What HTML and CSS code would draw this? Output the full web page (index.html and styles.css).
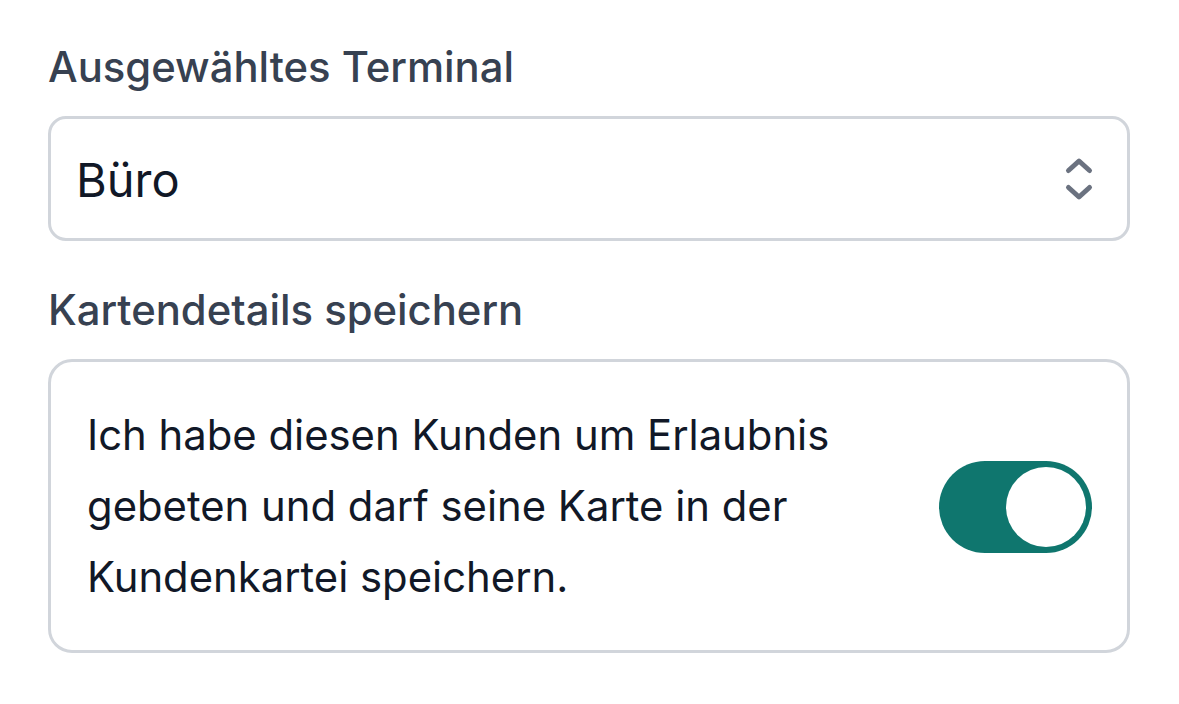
FILE: index.html
```html
<!DOCTYPE html>
<html lang="de">
<head>
<meta charset="utf-8">
<title>Terminal</title>
<link rel="stylesheet" href="styles.css">
</head>
<body>
<main class="form">
  <label class="label" for="terminal">Ausgewähltes Terminal</label>
  <div class="select" id="terminal">
    <span class="select-value">Büro</span>
    <svg class="chevrons" width="30" height="46" viewBox="0 0 30 46" aria-hidden="true">
      <polyline points="4.5,13.5 15,4 25.5,13.5" fill="none" stroke="#6b7280" stroke-width="5" stroke-linecap="round" stroke-linejoin="round"/>
      <polyline points="4.5,30.5 15,40 25.5,30.5" fill="none" stroke="#6b7280" stroke-width="5" stroke-linecap="round" stroke-linejoin="round"/>
    </svg>
  </div>
  <div class="label label-second">Kartendetails speichern</div>
  <div class="card">
    <p class="card-text">Ich habe diesen Kunden um Erlaubnis gebeten und darf seine Karte in der Kundenkartei speichern.</p>
    <div class="toggle" role="switch" aria-checked="true">
      <span class="knob"></span>
    </div>
  </div>
</main>
</body>
</html>
```

FILE: styles.css
```css
html, body {
  margin: 0;
  padding: 0;
  background: #ffffff;
}

body {
  font-family: Inter, "Noto Sans", "Liberation Sans", sans-serif;
  -webkit-font-smoothing: antialiased;
}

.form {
  display: flex;
  flex-direction: column;
  padding: 37px 49px 0 48px;
}

.label {
  display: block;
  font-size: 41.8px;
  line-height: 60px;
  font-weight: 500;
  color: #374151;
  margin: 0 0 19px 0;
}

.label-second {
  margin-top: 39px;
}

.select {
  height: 119px;
  border: 3px solid #d1d5db;
  border-radius: 18px;
  display: flex;
  align-items: center;
  justify-content: space-between;
  padding: 0 33px 0 25px;
}

.select-value {
  font-size: 47px;
  color: #111827;
  line-height: 60px;
  padding-top: 2px;
}

.chevrons {
  display: block;
  margin-top: 2px;
}

.card {
  border: 3px solid #d1d5db;
  border-radius: 24px;
  padding: 38px 35px 37px 36px;
  display: flex;
  align-items: center;
  justify-content: space-between;
  gap: 48px;
}

.card-text {
  margin: 0;
  font-size: 41.8px;
  line-height: 71px;
  color: #111827;
  flex: 1;
}

.toggle {
  position: relative;
  flex: none;
  width: 153px;
  height: 92px;
  border-radius: 46px;
  background: #0f766e;
}

.knob {
  position: absolute;
  top: 6px;
  right: 6px;
  width: 80px;
  height: 80px;
  border-radius: 50%;
  background: #ffffff;
}
```
